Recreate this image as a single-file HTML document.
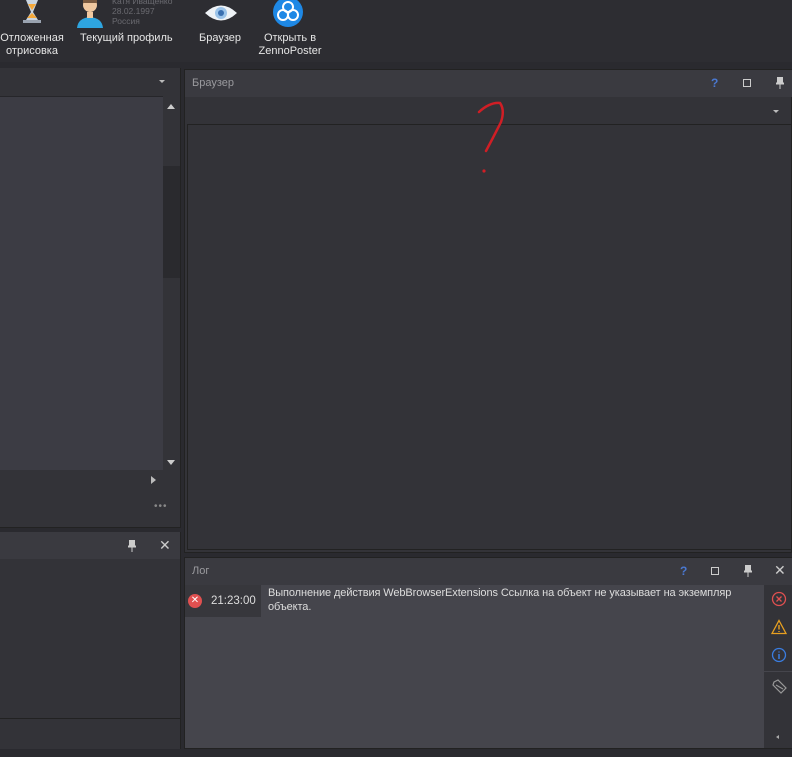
<!DOCTYPE html>
<html><head><meta charset="utf-8"><style>
*{margin:0;padding:0;box-sizing:border-box}
body{width:792px;height:757px;background:#2a2a2f;position:relative;overflow:hidden;font-family:"Liberation Sans","DejaVu Sans",sans-serif;font-size:11px;color:#d8d8d8}
.a{position:absolute}
.tb{left:0;top:0;width:792px;height:62px;background:#2d2d32}
.lbl{text-align:center;color:#e6e6e6;font-size:11px;line-height:13px}
.hdr{background:#3a3a40;color:#9a9a9e}
</style></head><body>
<div class="a tb"></div>
<svg class="a" style="left:20px;top:0" width="24" height="24"><rect x="3" y="20" width="18" height="3" fill="#9aa3b0"/><path d="M6 0 L18 0 L13 12 L18 20 L6 20 L11 12 Z" fill="#c8d4e0"/><path d="M7 18 L12 13 L17 18 Z" fill="#f4a83a"/><path d="M8 4 L16 4 L12 10 Z" fill="#f4a83a"/></svg>
<div class="a lbl" style="left:0;top:32px;width:64px">Отложенная<br>отрисовка</div>
<svg class="a" style="left:76px;top:0" width="28" height="28"><circle cx="14" cy="5" r="7" fill="#f0c8a0"/><path d="M7 0 Q14 -4 21 0 L21 3 L7 3Z" fill="#7a5a40"/><path d="M1 28 Q2 18 14 17 Q26 18 27 28Z" fill="#2ea5e0"/><rect x="11" y="12" width="6" height="6" fill="#f0c8a0"/></svg>
<div class="a" style="left:112px;top:-4px;color:#6a6a70;font-size:8.5px;line-height:10px">Катя Иващенко<br>28.02.1997<br>Россия</div>
<div class="a lbl" style="left:80px;top:32px">Текущий профиль</div>
<svg class="a" style="left:204px;top:2px" width="34" height="22"><path d="M1 11 Q17 -4 33 11 Q17 26 1 11Z" fill="#eef2f6"/><circle cx="17" cy="11" r="6" fill="#9cc4ea"/><circle cx="17" cy="11" r="3" fill="#3a6fb0"/></svg>
<div class="a lbl" style="left:199px;top:32px">Браузер</div>
<svg class="a" style="left:272px;top:-4px" width="32" height="32"><circle cx="16" cy="16" r="15" fill="#1e88e5"/><g fill="none" stroke="#fff" stroke-width="2"><circle cx="16" cy="11" r="5"/><circle cx="11" cy="19" r="5"/><circle cx="21" cy="19" r="5"/></g></svg>
<div class="a lbl" style="left:258px;top:32px;width:64px">Открыть в<br>ZennoPoster</div>

<div class="a" style="left:0;top:68px;width:181px;height:460px;background:#333338;border-right:1px solid #222"></div>
<div class="a" style="left:159px;top:80px;border-left:3px solid transparent;border-right:3px solid transparent;border-top:3px solid #bbb"></div>
<div class="a" style="left:0;top:96px;width:163px;height:374px;background:#3c3c44;border-top:1px solid #26262a"></div>
<div class="a" style="left:163px;top:96px;width:17px;height:374px;background:#333338"></div>
<div class="a" style="left:163px;top:166px;width:17px;height:112px;background:#2a2a2e"></div>
<div class="a" style="left:167px;top:104px;border-left:4px solid transparent;border-right:4px solid transparent;border-bottom:5px solid #ccc"></div>
<div class="a" style="left:167px;top:460px;border-left:4px solid transparent;border-right:4px solid transparent;border-top:5px solid #ccc"></div>
<div class="a" style="left:151px;top:476px;border-top:4px solid transparent;border-bottom:4px solid transparent;border-left:5px solid #bbb"></div>
<div class="a" style="left:154px;top:501px;color:#888;font-size:10px;letter-spacing:1px">•••</div>
<div class="a" style="left:0;top:527px;width:181px;height:1px;background:#222"></div>

<div class="a" style="left:0;top:532px;width:181px;height:217px;background:#333338;border-right:1px solid #222"></div>
<div class="a hdr" style="left:0;top:532px;width:180px;height:27px"></div>
<svg class="a" style="left:128px;top:540px" width="8" height="12"><path d="M1.5 0 H6.5 V6 H8 V7 H0 V6 H1.5Z M4 7 V12" fill="#ccc" stroke="#ccc" stroke-width="1"/></svg>
<div class="a" style="left:159px;top:537px;color:#ccc;font-size:14px">✕</div>
<div class="a" style="left:0;top:718px;width:180px;height:1px;background:#222"></div>

<div class="a" style="left:184px;top:69px;width:608px;height:484px;background:#333338;border:1px solid #222"></div>
<div class="a hdr" style="left:185px;top:70px;width:607px;height:27px;padding:7px 0 0 7px">Браузер</div>
<div class="a" style="left:711px;top:76px;color:#4a78d0;font-weight:bold;font-size:12px">?</div>
<div class="a" style="left:743px;top:79px;width:8px;height:8px;border:1px solid #ccc"></div>
<svg class="a" style="left:776px;top:77px" width="8" height="12"><path d="M1.5 0 H6.5 V6 H8 V7 H0 V6 H1.5Z M4 7 V12" fill="#ccc" stroke="#ccc" stroke-width="1"/></svg>
<div class="a" style="left:773px;top:110px;border-left:3px solid transparent;border-right:3px solid transparent;border-top:3px solid #bbb"></div>
<div class="a" style="left:187px;top:124px;width:605px;height:426px;border:1px solid #222;background:#333338"></div>
<svg class="a" style="left:470px;top:98px" width="40" height="80"><path d="M9 14 Q20 4 30 5 Q35 12 31 24 Q24 38 16 53" fill="none" stroke="#d01e25" stroke-width="2.5" stroke-linecap="round"/><circle cx="14" cy="73" r="1.6" fill="#d01e25"/></svg>

<div class="a" style="left:184px;top:557px;width:608px;height:192px;background:#45454c;border:1px solid #222"></div>
<div class="a hdr" style="left:185px;top:558px;width:607px;height:27px;padding:7px 0 0 7px">Лог</div>
<div class="a" style="left:680px;top:564px;color:#4a78d0;font-weight:bold;font-size:12px">?</div>
<div class="a" style="left:711px;top:567px;width:8px;height:8px;border:1px solid #ccc"></div>
<svg class="a" style="left:744px;top:565px" width="8" height="12"><path d="M1.5 0 H6.5 V6 H8 V7 H0 V6 H1.5Z M4 7 V12" fill="#ccc" stroke="#ccc" stroke-width="1"/></svg>
<div class="a" style="left:774px;top:562px;color:#ccc;font-size:14px">✕</div>
<div class="a" style="left:185px;top:585px;width:76px;height:32px;background:#37373c"></div>
<div class="a" style="left:188px;top:594px;width:14px;height:14px;border-radius:50%;background:#e05050;color:#fff;font-size:10px;text-align:center;line-height:14px;font-weight:bold">✕</div>
<div class="a" style="left:211px;top:595px;color:#ddd;font-size:11.5px">21:23:00</div>
<div class="a" style="left:268px;top:587px;color:#ddd;font-size:11px;line-height:13.5px;width:490px;letter-spacing:-0.1px">Выполнение действия WebBrowserExtensions Ссылка на объект не указывает на экземпляр объекта.</div>
<div class="a" style="left:764px;top:585px;width:28px;height:163px;background:#333338"></div>
<div class="a" style="left:764px;top:671px;width:28px;height:1px;background:#45454c"></div>
<svg class="a" style="left:771px;top:591px" width="16" height="16"><circle cx="8" cy="8" r="6.5" fill="none" stroke="#e05050" stroke-width="1.3"/><path d="M5.5 5.5 L10.5 10.5 M10.5 5.5 L5.5 10.5" stroke="#e05050" stroke-width="1.3"/></svg>
<svg class="a" style="left:771px;top:619px" width="16" height="16"><path d="M8 1.5 L15 14.5 L1 14.5 Z" fill="none" stroke="#e8a020" stroke-width="1.3"/><path d="M8 6 L8 10.5 M8 12 L8 13" stroke="#e8a020" stroke-width="1.4"/></svg>
<svg class="a" style="left:771px;top:647px" width="16" height="16"><circle cx="8" cy="8" r="6.5" fill="none" stroke="#3a7de0" stroke-width="1.3"/><path d="M8 7 L8 12 M8 4.5 L8 5.5" stroke="#3a7de0" stroke-width="1.5"/></svg>
<svg class="a" style="left:771px;top:679px" width="16" height="16"><path d="M3 3 L7 1 L15 9 L10 14 L2 6 Z M5 6 L12 10" fill="none" stroke="#999" stroke-width="1.2"/></svg>
<div class="a" style="left:776px;top:735px;border-top:2px solid transparent;border-bottom:2px solid transparent;border-right:3px solid #aaa"></div>
</body></html>
